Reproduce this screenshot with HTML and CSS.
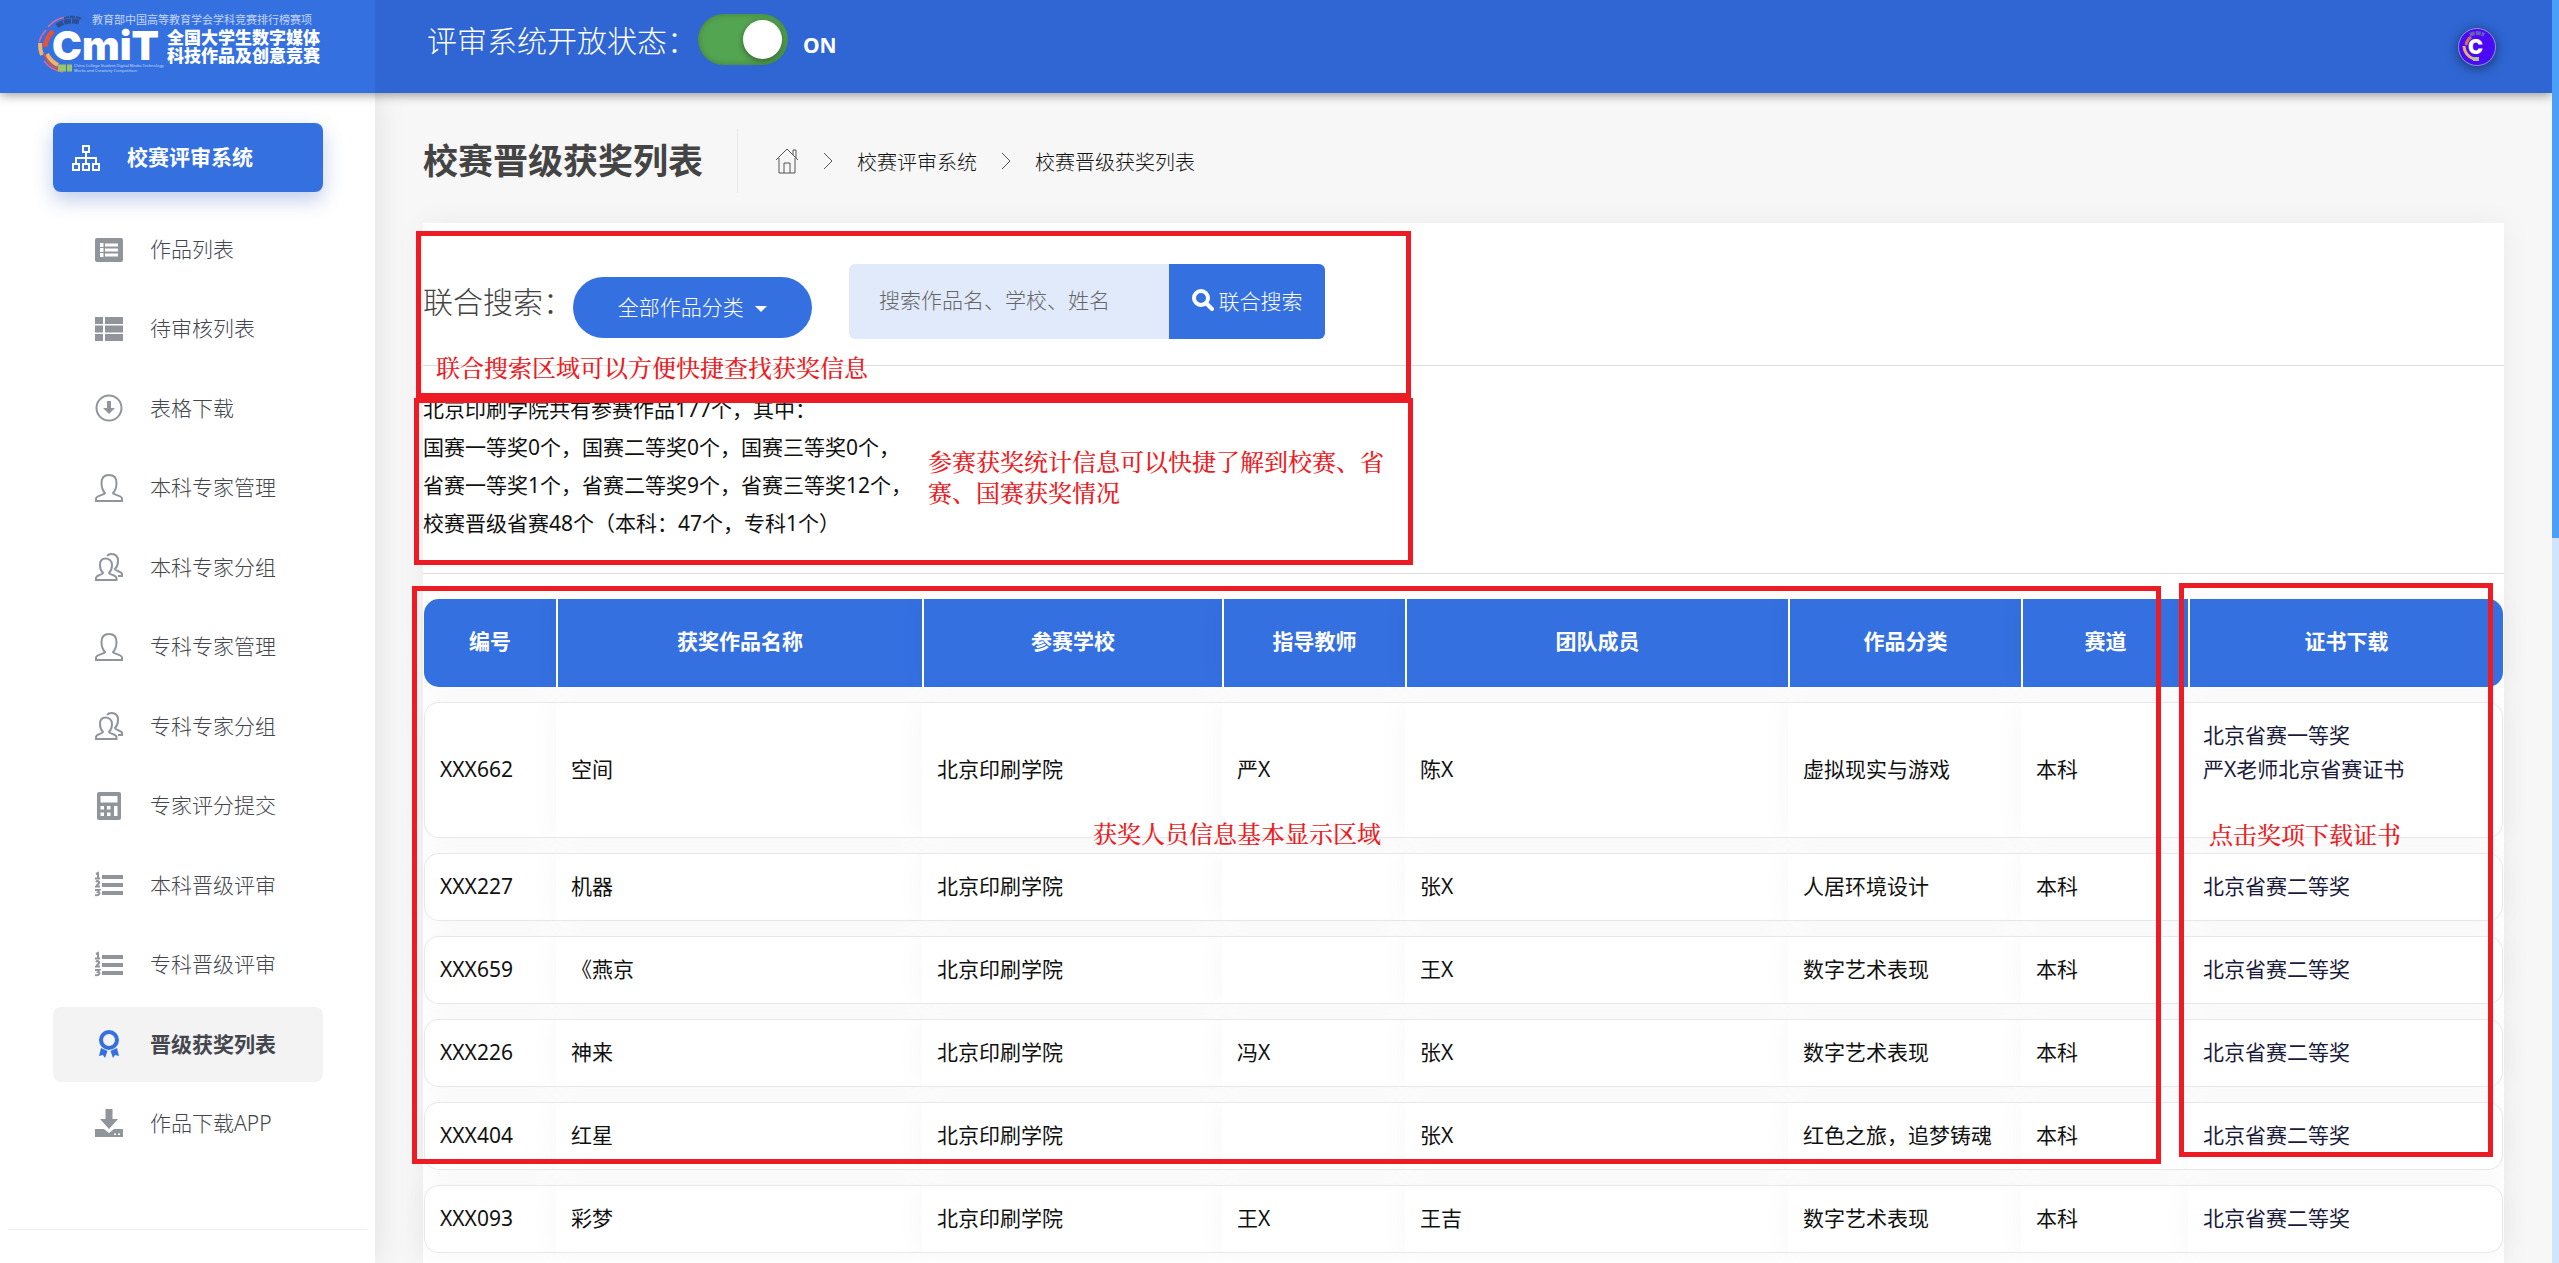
FILE: index.html
```
<!DOCTYPE html>
<html lang="zh-CN">

<head>
    <meta charset="utf-8">
    <title>校赛晋级获奖列表</title>
    <link rel="stylesheet" href="styles.css">
</head>

<body>

    <!-- icons used more than once -->
    <svg class="sprite" aria-hidden="true">
        <symbol id="user" viewBox="0 0 28 28">
            <path d="M10 19 C7.500 16.500 6.500 13 6.500 9 C6.500 3.500 9.500 1 14 1 S21.500 3.500 21.500 9 C21.500 13 20.500 16.500 18 19 C18.500 21 27 21.500 27 24.500 V27 H1 V24.500 C1 21.500 9.500 21 10 19 Z" />
        </symbol>
        <symbol id="users" viewBox="0 0 28 28">
            <path d="M8 20 C6 18 5 15.500 5 12 C5 7.500 7.500 5.500 10.500 5.500 S17 7.500 17 12 C17 15.500 16 18 14 20 C14.500 22 21.500 22 21.500 25 V27 H1 V25 C1 22 7.500 22 8 20 Z M12 3 C13 1.500 14.500 1 16.500 1 C20.500 1 23 3.500 23 8 C23 11.500 22 14 20 16 C20 18 27 18.500 27 21 V23 H23" />
        </symbol>
        <symbol id="list-ol" viewBox="0 0 28 28">
            <path d="M7 4 H28 V8 H7 Z M7 12 H28 V16 H7 Z M7 20 H28 V24 H7 Z" />
            <path class="line" d="M1 3 L3 2 V7 M0 7.500 H5 M1 11 C2 9.500 4.500 10 4 12 L1 15.500 H5 M0 19 H4.500 L3 21 C5.500 21 5 25 0 24" />
        </symbol>
    </svg>

    <header>
        <a class="brand" href="#" aria-label="全国大学生数字媒体科技作品及创意竞赛">
            <svg class="brand-logo" viewBox="0 0 300 60">
                <g fill="none">
                    <path stroke="#d96a9c" stroke-width="1.500" d="M30 2 A29 29 0 0 0 12 12 M10 15 A29 29 0 0 0 3 27 M8 46 A29 29 0 0 0 27 57" />
                    <path stroke="#e0533f" stroke-width="5" d="M17 16 A26 26 0 0 0 9 32" />
                    <path stroke="#efb56a" stroke-width="4" d="M4 28 A29 29 0 0 0 6 40 M11 39 A24 24 0 0 0 22 50" />
                    <path stroke="#d9543f" stroke-width="2" d="M8 39 A26 26 0 0 0 22 54" />
                    <path stroke="#2b4f92" stroke-width="5" stroke-dasharray="7 1" d="M21 11 A26 26 0 0 1 43 7" />
                    <path stroke="#2b4f92" stroke-width="2" stroke-dasharray="5 1" d="M28 3 A26 26 0 0 1 46 4" />
                    <path stroke="#9cc46a" stroke-width="7" stroke-dasharray="8 1" d="M22 53 H36" />
                </g>
                <g fill="#fff">
                    <text class="logo-word" x="16" y="45">CmiT</text>
                    <text class="logo-top" x="56" y="9">教育部中国高等教育学会学科竞赛排行榜赛项</text>
                    <text class="logo-name" x="131" y="29">全国大学生数字媒体</text>
                    <text class="logo-name" x="131" y="47">科技作品及创意竞赛</text>
                    <text class="logo-en" x="38" y="52">China College Student Digital Media Technology</text>
                    <text class="logo-en" x="38" y="57">Works and Creativity Competition</text>
                </g>
            </svg>
        </a>
        <div class="topbar">
            <label class="status" for="status">评审系统开放状态：</label>
            <input class="toggle" id="status" type="checkbox" checked>
            <span class="on">ON</span>
            <button class="avatar" aria-label="账号">
                <svg viewBox="0 0 38 38">
                    <circle cx="19" cy="19" r="18.500" fill="#4a0af5" stroke="#8f8fd8" />
                    <g fill="none">
                        <path stroke="#d0705a" stroke-width="3" d="M13 9 A12 12 0 0 0 8 17" />
                        <path stroke="#e8b070" stroke-width="3" d="M6 18 A14 14 0 0 0 16 31" />
                        <path stroke="#6a5fb8" stroke-width="4" stroke-dasharray="5 1" d="M12 7 A14 14 0 0 1 26 7" />
                        <path stroke="#a9c4a0" stroke-width="4" stroke-dasharray="6 1" d="M15 31 H22" />
                    </g>
                    <text x="10" y="26">C</text>
                </svg>
            </button>
        </div>
    </header>

    <div class="layout">

        <nav class="sidebar">
            <a class="menu-head" href="#">
                <svg viewBox="0 0 28 26">
                    <path d="M11 1 H17 V7 H11 Z M14 7 V19 M4 19 V13 H24 V19 M1 19 H7 V25 H1 Z M11 19 H17 V25 H11 Z M21 19 H27 V25 H21 Z" />
                </svg>
                <span>校赛评审系统</span>
            </a>
            <ul>
                <li><a href="#">
                    <svg viewBox="0 0 28 28"><path fill-rule="evenodd" d="M2 2 H26 Q28 2 28 4 V24 Q28 26 26 26 H2 Q0 26 0 24 V4 Q0 2 2 2 Z M5 7 V11 H8.500 V7 Z M10 7.500 V10.500 H23 V7.500 Z M5 12 V16 H8.500 V12 Z M10 12.500 V15.500 H23 V12.500 Z M5 17 V21 H8.500 V17 Z M10 17.500 V20.500 H23 V17.500 Z" /></svg>
                    <span>作品列表</span></a></li>
                <li><a href="#">
                    <svg viewBox="0 0 28 28"><path d="M0 2 H8 V9 H0 Z M10 2 H28 V9 H10 Z M0 10.500 H8 V17.500 H0 Z M10 10.500 H28 V17.500 H10 Z M0 19 H8 V26 H0 Z M10 19 H28 V26 H10 Z" /></svg>
                    <span>待审核列表</span></a></li>
                <li><a href="#">
                    <svg viewBox="0 0 28 28"><circle class="ring" cx="14" cy="14" r="12.500" /><path d="M12 7 H16 V14 H20 L14 20 L8 14 H12 Z" /></svg>
                    <span>表格下载</span></a></li>
                <li><a href="#"><svg class="outline"><use href="#user" /></svg><span>本科专家管理</span></a></li>
                <li><a href="#"><svg class="outline"><use href="#users" /></svg><span>本科专家分组</span></a></li>
                <li><a href="#"><svg class="outline"><use href="#user" /></svg><span>专科专家管理</span></a></li>
                <li><a href="#"><svg class="outline"><use href="#users" /></svg><span>专科专家分组</span></a></li>
                <li><a href="#">
                    <svg viewBox="0 0 28 28"><path fill-rule="evenodd" d="M4 0 H24 Q26 0 26 2 V26 Q26 28 24 28 H4 Q2 28 2 26 V2 Q2 0 4 0 Z M5.500 4 V10.500 H22.500 V4 Z M5.500 14 V17.500 H9 V14 Z M12 14 V17.500 H15.500 V14 Z M19 14 V24 H22.500 V14 Z M5.500 20.500 V24 H9 V20.500 Z M12 20.500 V24 H15.500 V20.500 Z" /></svg>
                    <span>专家评分提交</span></a></li>
                <li><a href="#"><svg><use href="#list-ol" /></svg><span>本科晋级评审</span></a></li>
                <li><a href="#"><svg><use href="#list-ol" /></svg><span>专科晋级评审</span></a></li>
                <li><a class="active" href="#">
                    <svg viewBox="0 0 28 28"><circle class="seal" cx="14" cy="10" r="8" /><path d="M6 18 L12.500 21 L10 28 L8 25 L4 26 Z M22 18 L15.500 21 L18 28 L20 25 L24 26 Z" /></svg>
                    <span>晋级获奖列表</span></a></li>
                <li><a href="#">
                    <svg viewBox="0 0 28 28"><path fill-rule="evenodd" d="M10.500 0 H17.500 V10 H23 L14 20 L5 10 H10.500 Z M0 20 H9 L14 24 L19 20 H28 V28 H0 Z M19 24.500 V26 H21 V24.500 Z M23 24.500 V26 H25 V24.500 Z" /></svg>
                    <span>作品下载APP</span></a></li>
            </ul>
        </nav>

        <main>
            <div class="page-title">
                <h1>校赛晋级获奖列表</h1>
                <div class="breadcrumb">
                    <a href="#" aria-label="首页">
                        <svg class="home" viewBox="0 0 24 26"><path d="M1 12 L12 1 L23 12 M4 10 V25 H20 V10 M9 25 V15 H15 V25 M18 7 V2 H21 V10" /></svg>
                    </a>
                    <svg class="arrow" viewBox="0 0 10 18"><path d="M1 1 L9 9 L1 17" /></svg>
                    <a href="#">校赛评审系统</a>
                    <svg class="arrow" viewBox="0 0 10 18"><path d="M1 1 L9 9 L1 17" /></svg>
                    <a href="#">校赛晋级获奖列表</a>
                </div>
            </div>

            <section class="panel">
                <form class="search">
                    <label for="keyword">联合搜索：</label>
                    <button class="category" type="button">全部作品分类 <span class="caret"></span></button>
                    <input id="keyword" type="text" placeholder="搜索作品名、学校、姓名">
                    <button class="go" type="button">
                        <svg viewBox="0 0 22 22"><path d="M15 15 L20 20" /><circle cx="9" cy="9" r="7" /></svg>
                        联合搜索
                    </button>
                </form>

                <div class="summary">
                    <p>北京印刷学院共有参赛作品177个，其中：</p>
                    <p>国赛一等奖0个，国赛二等奖0个，国赛三等奖0个，</p>
                    <p>省赛一等奖1个，省赛二等奖9个，省赛三等奖12个，</p>
                    <p>校赛晋级省赛48个（本科：47个，专科1个）</p>
                </div>

                <table>
                    <colgroup>
                        <col class="c-id"><col class="c-name"><col class="c-school"><col class="c-teacher">
                        <col class="c-team"><col class="c-kind"><col class="c-track"><col>
                    </colgroup>
                    <thead>
                        <tr>
                            <th>编号</th>
                            <th>获奖作品名称</th>
                            <th>参赛学校</th>
                            <th>指导教师</th>
                            <th>团队成员</th>
                            <th>作品分类</th>
                            <th>赛道</th>
                            <th>证书下载</th>
                        </tr>
                    </thead>
                    <tbody>
                        <tr>
                            <td>XXX662</td>
                            <td>空间</td>
                            <td>北京印刷学院</td>
                            <td>严X</td>
                            <td>陈X</td>
                            <td>虚拟现实与游戏</td>
                            <td>本科</td>
                            <td><a href="#">北京省赛一等奖</a><br><a href="#">严X老师北京省赛证书</a><br>&nbsp;</td>
                        </tr>
                        <tr>
                            <td>XXX227</td>
                            <td>机器</td>
                            <td>北京印刷学院</td>
                            <td></td>
                            <td>张X</td>
                            <td>人居环境设计</td>
                            <td>本科</td>
                            <td><a href="#">北京省赛二等奖</a></td>
                        </tr>
                        <tr>
                            <td>XXX659</td>
                            <td>《燕京</td>
                            <td>北京印刷学院</td>
                            <td></td>
                            <td>王X</td>
                            <td>数字艺术表现</td>
                            <td>本科</td>
                            <td><a href="#">北京省赛二等奖</a></td>
                        </tr>
                        <tr>
                            <td>XXX226</td>
                            <td>神来</td>
                            <td>北京印刷学院</td>
                            <td>冯X</td>
                            <td>张X</td>
                            <td>数字艺术表现</td>
                            <td>本科</td>
                            <td><a href="#">北京省赛二等奖</a></td>
                        </tr>
                        <tr>
                            <td>XXX404</td>
                            <td>红星</td>
                            <td>北京印刷学院</td>
                            <td></td>
                            <td>张X</td>
                            <td>红色之旅，追梦铸魂</td>
                            <td>本科</td>
                            <td><a href="#">北京省赛二等奖</a></td>
                        </tr>
                        <tr>
                            <td>XXX093</td>
                            <td>彩梦</td>
                            <td>北京印刷学院</td>
                            <td>王X</td>
                            <td>王吉</td>
                            <td>数字艺术表现</td>
                            <td>本科</td>
                            <td><a href="#">北京省赛二等奖</a></td>
                        </tr>
                    </tbody>
                </table>
            </section>
        </main>
    </div>

    <div class="scrollbar"><div class="thumb"></div></div>

    <!-- red notes laid over the page -->
    <div class="box box-search"></div>
    <div class="box box-summary"></div>
    <div class="box box-list"></div>
    <div class="box box-cert"></div>
    <p class="note note-search">联合搜索区域可以方便快捷查找获奖信息</p>
    <p class="note note-summary">参赛获奖统计信息可以快捷了解到校赛、省赛、国赛获奖情况</p>
    <p class="note note-list">获奖人员信息基本显示区域</p>
    <p class="note note-cert">点击奖项下载证书</p>

</body>

</html>
```
FILE: styles.css
```
* {
    box-sizing: border-box;
}

body {
    position: relative;
    display: flex;
    flex-direction: column;
    height: 100vh;
    margin: 0;
    padding-right: 7px;
    overflow: hidden;
    background: #f7f7f7;
    color: #111;
    font-family: "Noto Sans", "Noto Sans CJK SC", sans-serif;
    font-size: 21px;
    font-weight: 400;
}

a {
    color: inherit;
    text-decoration: none;
}

button,
input {
    font: inherit;
    border: 0;
}

p {
    margin: 0;
}

.sprite {
    display: none;
}

/* top bar */
header {
    position: relative;
    z-index: 2;
    display: flex;
    flex: none;
    height: 93px;
    box-shadow: 0 2px 10px rgba(0, 0, 0, 0.4);
}

.brand {
    width: 375px;
    padding: 15px 36px;
    background: #3470e0;
}

.brand-logo {
    display: block;
    width: 300px;
    height: 60px;
    overflow: visible;
}

.logo-word {
    font: 900 40px Inter, sans-serif;
}

.logo-top {
    font-size: 11px;
    opacity: 0.7;
}

.logo-name {
    font-size: 17px;
    font-weight: 900;
}

.logo-en {
    font-size: 4px;
    opacity: 0.7;
}

.topbar {
    display: flex;
    flex: 1;
    align-items: center;
    padding: 0 56px 0 52px;
    background: #2f66d3;
    color: #fff;
}

.status {
    width: 271px;
    padding-bottom: 16px;
    font-size: 30px;
    font-weight: 300;
}

.toggle {
    appearance: none;
    display: flex;
    align-items: center;
    width: 90px;
    height: 51px;
    margin: 0 15px 14px 0;
    padding: 0 6px;
    border-radius: 26px;
    background: #54a551;
    box-shadow: inset 0 0 6px rgba(0, 0, 0, 0.25);
}

.toggle::before {
    content: "";
    width: 39px;
    height: 39px;
    margin-left: auto;
    border-radius: 50%;
    background: #fff;
    box-shadow: 0 2px 6px rgba(0, 0, 0, 0.4);
}

.on {
    padding-bottom: 3px;
    font-weight: 700;
}

.avatar {
    width: 38px;
    height: 38px;
    margin-left: auto;
    padding: 0;
    border-radius: 50%;
    background: none;
    box-shadow: 0 2px 12px rgba(0, 0, 0, 0.5);
}

.avatar svg {
    display: block;
}

.avatar text {
    fill: #fff;
    font: 900 20px Inter, sans-serif;
}

.layout {
    display: flex;
    flex: 1;
    min-height: 0;
}

/* left menu */
.sidebar {
    flex: none;
    width: 375px;
    padding: 30px 8px 0;
    background: #fff;
    box-shadow: 0 0 30px rgba(0, 0, 0, 0.1);
}

.menu-head {
    display: flex;
    align-items: center;
    gap: 27px;
    height: 69px;
    margin: 0 44px 20px 45px;
    padding-left: 19px;
    border-radius: 8px;
    background: #3470e0;
    box-shadow: 0 8px 20px rgba(45, 85, 190, 0.3);
    color: #fff;
    font-weight: 700;
}

.menu-head svg {
    width: 28px;
    height: 26px;
    fill: none;
    stroke: #fff;
    stroke-width: 2;
}

.sidebar span {
    padding-bottom: 3px;
}

.sidebar ul {
    display: flex;
    flex-direction: column;
    justify-content: space-between;
    height: 1018px;
    margin: 0;
    padding: 0 44px 68px 45px;
    border-bottom: 1px solid #eee;
    list-style: none;
}

.sidebar li a {
    display: flex;
    align-items: center;
    gap: 27px;
    height: 75px;
    padding-left: 42px;
    border-radius: 8px;
    color: #44464e;
    font-weight: 300;
}

.sidebar li svg {
    width: 28px;
    height: 28px;
    fill: #8f959a;
}

.sidebar .outline {
    fill: none;
    stroke: #8f959a;
    stroke-width: 2;
}

.ring,
.line {
    fill: none;
    stroke: #8f959a;
    stroke-width: 2;
}

.sidebar li .active {
    background: #f3f3f3;
    font-weight: 700;
}

.sidebar .active svg {
    fill: #3470e0;
}

.seal {
    fill: none;
    stroke: #3470e0;
    stroke-width: 4;
}

/* content */
main {
    flex: 1;
    min-width: 0;
    padding: 36px 48px 0;
}

.page-title {
    display: flex;
    align-items: center;
    height: 64px;
    margin-bottom: 30px;
}

h1 {
    margin: 0;
    padding-right: 34px;
    color: #444;
    font-size: 35px;
    font-weight: 700;
    line-height: 64px;
}

.breadcrumb {
    display: flex;
    align-items: center;
    gap: 24px;
    height: 64px;
    padding-left: 37px;
    border-left: 1px solid #e8e8e8;
    font-size: 20px;
    font-weight: 300;
}

.breadcrumb svg {
    display: block;
    fill: none;
    stroke: #555;
}

.home {
    width: 24px;
    height: 26px;
}

.arrow {
    width: 10px;
    height: 18px;
}

.panel {
    background: #fff;
    box-shadow: 0 0 30px rgba(0, 0, 0, 0.05);
}

.search {
    display: flex;
    height: 143px;
    padding-top: 41px;
    border-bottom: 1px solid #ddd;
    font-weight: 300;
}

.search label {
    width: 150px;
    color: #444;
    font-size: 30px;
    line-height: 75px;
}

.category {
    width: 239px;
    height: 61px;
    margin: 13px 37px 0 0;
    padding-bottom: 4px;
    border-radius: 31px;
    background: #3470e0;
    color: #fff;
}

.caret {
    display: inline-block;
    margin-left: 6px;
    border: 6px solid transparent;
    border-top-color: #fff;
    border-bottom: 0;
    vertical-align: middle;
}

.search input {
    width: 320px;
    height: 75px;
    padding: 0 30px 3px;
    border-radius: 6px 0 0 6px;
    background: #e1eafb;
}

.search input::placeholder {
    color: #666;
}

.go {
    display: flex;
    align-items: center;
    justify-content: center;
    gap: 5px;
    width: 156px;
    height: 75px;
    padding: 0 6px 4px;
    border-radius: 0 6px 6px 0;
    background: #3470e0;
    color: #fff;
}

.go svg {
    width: 22px;
    height: 22px;
    fill: none;
    stroke: #fff;
    stroke-width: 4;
    stroke-linecap: round;
}

.summary {
    height: 208px;
    padding-top: 24px;
    border-bottom: 1px solid #ddd;
    line-height: 38px;
}

table {
    width: 100%;
    margin-top: 10px;
    padding: 0 1px;
    table-layout: fixed;
    border-spacing: 0 15px;
    line-height: 34px;
}

.c-id { width: 132px; }
.c-name { width: 366px; }
.c-school { width: 300px; }
.c-teacher { width: 183px; }
.c-team { width: 383px; }
.c-kind { width: 233px; }
.c-track { width: 167px; }

th {
    height: 88px;
    padding: 0 0 4px;
    border-left: 2px solid #fff;
    background: #3470e0;
    box-shadow: 0 0 30px rgba(0, 0, 0, 0.04);
    color: #fff;
    font-weight: 700;
}

td {
    padding: 15px 15px 17px;
    border: solid #e8e8e8;
    border-width: 1px 0;
    background: #fff;
    box-shadow: 0 0 30px rgba(0, 0, 0, 0.04);
}

td a {
    color: #1b1b3c;
}

th:first-child,
td:first-child {
    border-radius: 15px 0 0 15px;
}

th:last-child,
td:last-child {
    border-radius: 0 15px 15px 0;
}

th:first-child {
    border-left: 0;
}

td:first-child {
    border-left-width: 1px;
}

td:last-child {
    border-right-width: 1px;
}

.scrollbar {
    position: absolute;
    top: 0;
    right: 0;
    z-index: 3;
    width: 7px;
    height: 100%;
    background: #d0e5fb;
}

.thumb {
    height: 538px;
    background: #4a9ff9;
}

/* red notes */
.box {
    position: absolute;
    z-index: 4;
    border: 5px solid #ed1c24;
    pointer-events: none;
}

.box-search { left: 416px; top: 231px; width: 995px; height: 167px; }
.box-summary { left: 414px; top: 398px; width: 999px; height: 167px; }
.box-list { left: 412px; top: 586px; width: 1749px; height: 578px; }
.box-cert { left: 2179px; top: 583px; width: 314px; height: 574px; }

.note {
    position: absolute;
    z-index: 4;
    color: #ed1c24;
    font-family: "Noto Serif CJK SC", SimSun, "Noto Sans CJK SC", serif;
    font-size: 24px;
    font-weight: 500;
    line-height: 31px;
}

.note-search { left: 436px; top: 351px; }
.note-summary { left: 928px; top: 445px; width: 470px; }
.note-list { left: 1093px; top: 817px; }
.note-cert { left: 2209px; top: 818px; }
```
